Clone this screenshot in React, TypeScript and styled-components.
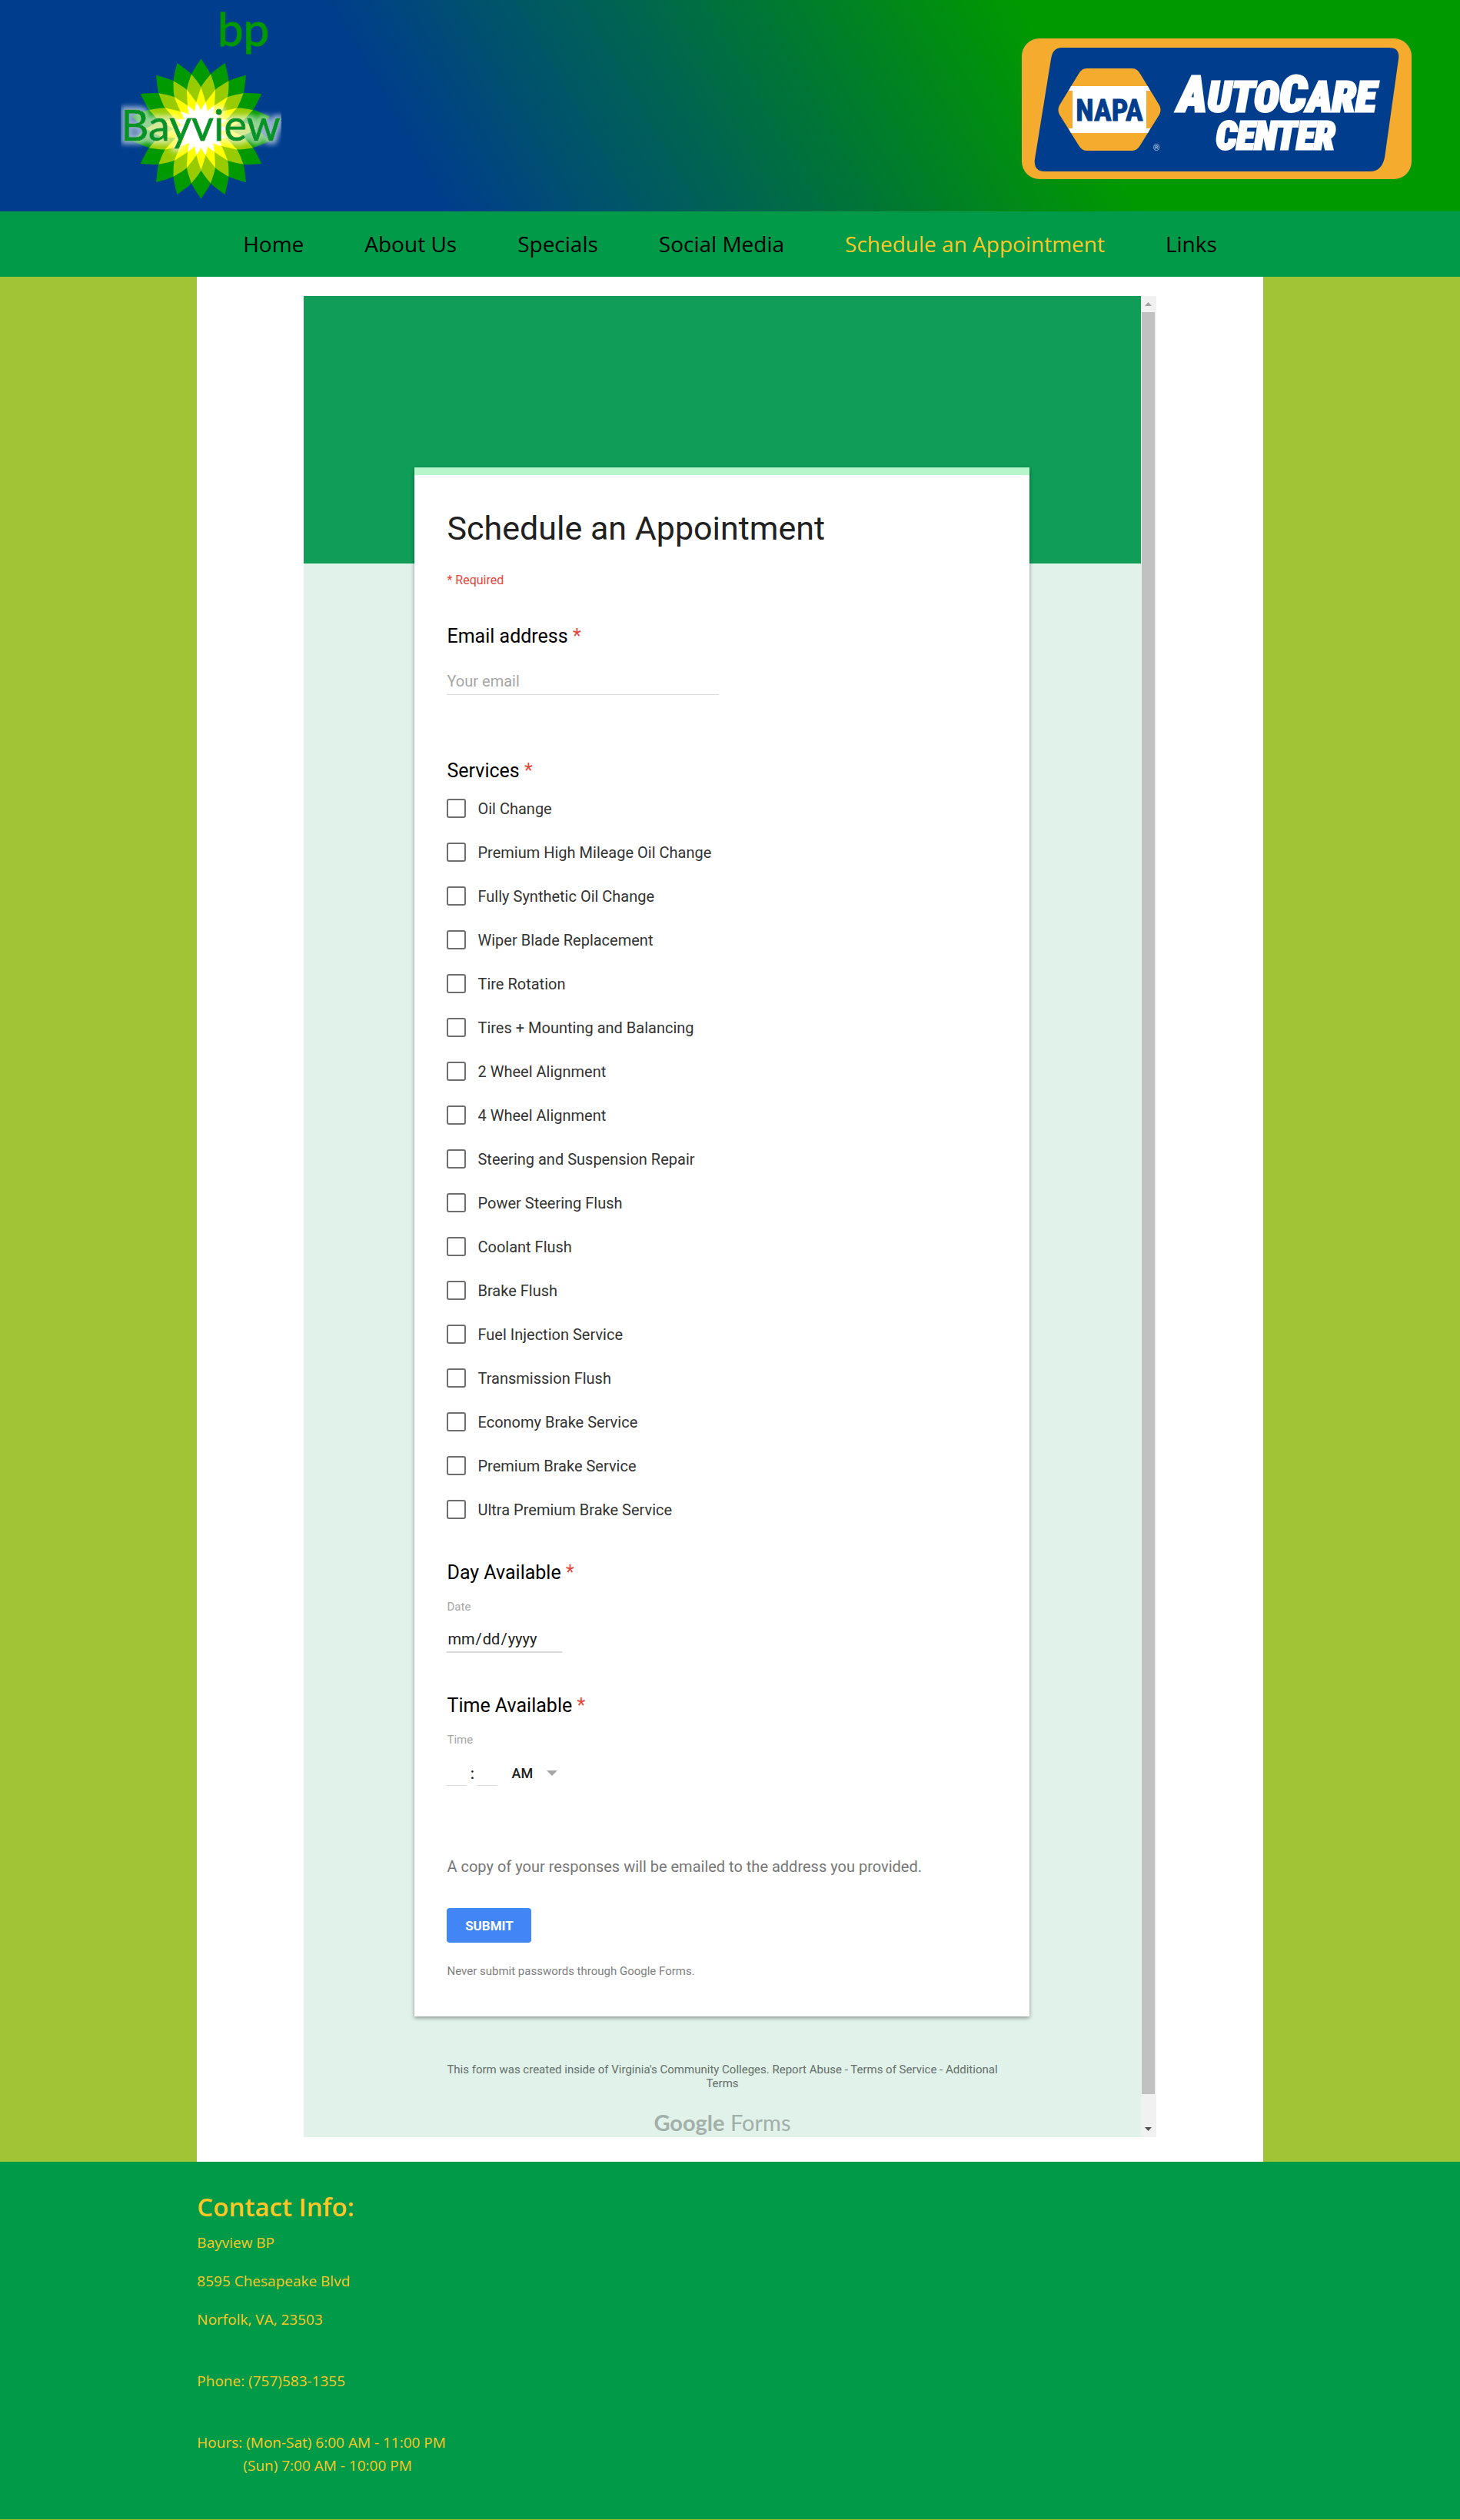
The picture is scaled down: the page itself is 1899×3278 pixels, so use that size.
import React from "react";
import styled, { createGlobalStyle } from "styled-components";

const SANS = `"Open Sans", "Noto Sans", sans-serif`;
const FORM = `Roboto, "Liberation Sans", sans-serif`;

const GlobalStyle = createGlobalStyle`
  *, *::before, *::after { box-sizing: border-box; }
  body { margin: 0; background: #a1c436; font-family: ${SANS}; }
  h1, h2, h3, p, ul, fieldset { margin: 0; padding: 0; border: 0; }
  ul { list-style: none; }
`;

/* ---------- site header ---------- */

const Header = styled.header`
  display: flex;
  justify-content: space-between;
  align-items: center;
  padding: 0 63px 0 157px;
  background: linear-gradient(60deg, #003d8d 28%, #009900 72%);
`;

const BpLogo = styled.svg`
  display: block;
  width: 209px;
  height: 275px;
`;

const NapaLogo = styled.svg`
  display: block;
  width: 507px;
  height: 183px;
  margin-top: 8px;
`;

const Nav = styled.nav`
  background: #009a49;
`;

const NavList = styled.ul`
  display: flex;
  justify-content: center;
  gap: 79px;
`;

const NavLink = styled.a<{ $active?: boolean }>`
  display: block;
  font-size: 28px;
  line-height: 85px;
  text-decoration: none;
  color: ${(p) => (p.$active ? "#ffc726" : "#000")};
`;

/* ---------- page body ---------- */

const Main = styled.main`
  width: 73%;
  margin: 0 auto;
  padding: 25px 0 32px;
  background: #fff;
`;

const Frame = styled.div`
  display: flex;
  width: 80%;
  margin: 0 auto;
`;

const FormPage = styled.div`
  flex: 1;
  display: flex;
  flex-direction: column;
  align-items: center;
  padding-top: 223px;
  font-family: ${FORM};
  background: linear-gradient(#0f9d58 348px, #e0f2e9 348px);
`;

const Card = styled.form`
  width: 100%;
  max-width: 800px;
  padding: 42px 42px 49px;
  border-top: 10px solid #b7f6cb;
  background: #fff;
  box-shadow: 0 2px 5px rgba(0, 0, 0, 0.4);
`;

const Title = styled.h1`
  font-size: 43px;
  font-weight: 400;
  line-height: 54px;
  color: #212121;
`;

const RequiredNote = styled.p`
  margin-top: 31px;
  font-size: 16px;
  line-height: 20px;
  color: #e5463a;
`;

const Question = styled.div<{ $gap: number }>`
  margin-top: ${(p) => p.$gap}px;
`;

const QuestionSet = styled.fieldset<{ $gap: number }>`
  min-width: 0;
  && { margin-top: ${(p) => p.$gap}px; }
`;

const QuestionTitle = styled.div`
  font-size: 25px;
  line-height: 32px;
  color: #000;
`;

const Legend = styled.legend`
  padding: 0;
`;

const Star = styled.span`
  color: #e5463a;
`;

const EmailInput = styled.input`
  display: block;
  width: 100%;
  max-width: 354px;
  height: 32px;
  margin-top: 28px;
  padding: 0 0 3px;
  border: 0;
  border-bottom: 1px solid #dadada;
  background: transparent;
  font: 20px ${FORM};
  color: #212121;
  &::placeholder { color: #a6a6a6; opacity: 1; }
`;

const Options = styled.ul`
  padding-top: 4px;
`;

const Option = styled.label`
  display: flex;
  align-items: center;
  gap: 15px;
  height: 57px;
  font-size: 20px;
  color: #333;
`;

const CheckBox = styled.input`
  appearance: none;
  width: 25px;
  height: 25px;
  margin: 0;
  border: 2px solid #6e6e6e;
  border-radius: 3px;
  background: #fff;
  &:checked { background: #0f9d58; }
`;

const FieldLabel = styled.label`
  display: block;
  margin-top: 18px;
  font-size: 15px;
  line-height: 20px;
  color: #a6a6a6;
`;

const DateInput = styled.input`
  display: block;
  width: 150px;
  height: 34px;
  margin-top: 16px;
  padding: 0;
  border: 0;
  border-bottom: 2px solid #dadada;
  background: transparent;
  font: 20px ${FORM};
  color: #212121;
  &::-webkit-calendar-picker-indicator { display: none; }
`;

const TimeRow = styled.div`
  display: flex;
  align-items: center;
  height: 33px;
  margin-top: 17px;
  font-size: 20px;
  font-weight: 500;
  color: #212121;
`;

const TimeInput = styled.input`
  width: 26px;
  height: 33px;
  padding: 0;
  border: 0;
  border-bottom: 1px solid #dadada;
  background: transparent;
  font: 20px ${FORM};
  text-align: center;
`;

const Colon = styled.span`
  width: 14px;
  text-align: center;
`;

const Meridiem = styled.div`
  display: flex;
  align-items: center;
  margin-left: 18px;
`;

const MeridiemSelect = styled.select`
  appearance: none;
  width: 46px;
  padding: 0;
  border: 0;
  background: transparent;
  font: 500 18px ${FORM};
  color: #212121;
`;

const CopyNote = styled.p`
  margin-top: 91px;
  font-size: 20px;
  line-height: 28px;
  color: #777;
`;

const Submit = styled.button`
  display: block;
  width: 110px;
  height: 45px;
  margin-top: 40px;
  padding: 0;
  border: 0;
  border-radius: 4px;
  background: #4285f4;
  font: 700 17px ${FORM};
  color: #fff;
`;

const SafetyNote = styled.p`
  margin-top: 27px;
  font-size: 15px;
  line-height: 20px;
  color: #808080;
`;

const Disclaimer = styled.p`
  width: 100%;
  max-width: 720px;
  margin-top: 60px;
  font-size: 15px;
  line-height: 18px;
  text-align: center;
  color: #666f6a;
`;

const PlainLink = styled.a`
  color: inherit;
  text-decoration: none;
`;

const FormsBrand = styled.a`
  display: block;
  margin: 24px 0 1px;
  font-family: Lato, sans-serif;
  font-size: 29px;
  line-height: 36px;
  text-decoration: none;
  color: #a3afa9;
`;

const BrandStrong = styled.span`
  font-weight: 700;
`;

/* ---------- scroll bar ---------- */

const ScrollBar = styled.div`
  display: flex;
  flex-direction: column;
  align-items: center;
  width: 20px;
  background: #f1f1f1;
`;

const ScrollButton = styled.button`
  display: flex;
  align-items: center;
  justify-content: center;
  width: 20px;
  height: 21px;
  padding: 0;
  border: 0;
  background: transparent;
`;

const ScrollTrack = styled.div`
  flex: 1;
  width: 17px;
`;

const ScrollThumb = styled.div`
  height: 98.5%;
  background: #c1c1c1;
`;

/* ---------- site footer ---------- */

const Footer = styled.footer`
  padding: 32px 13.5% 55px;
  background: #009a49;
  color: #ffc726;
`;

const FooterTitle = styled.h2`
  font-size: 33px;
  font-weight: 600;
  line-height: 54px;
`;

const FooterLine = styled.p<{ $before?: number }>`
  padding-top: ${(p) => p.$before ?? 0}px;
  font-size: 19px;
  line-height: 30px;
`;

const SundayHours = styled.span`
  display: block;
  padding-left: 60px;
`;

/* Right-hand edge of one petal in polar form: every 10 degrees it crosses the
   edge of a neighbour, which is where the next inner layer has its tip. */
const EDGE = [91, 72, 54, 35, 24, 13, 0];
const LAYERS = ["#009900", "#99cc00", "#ffff00", "#ffffff"];

function petal(layer: number) {
  const right = EDGE.slice(layer).map((r, i) => {
    const a = (i * Math.PI) / 18;
    return [r * Math.sin(a), -r * Math.cos(a)];
  });
  const curve = (pts: number[][]) => {
    let d = "";
    for (let i = 0; i < pts.length - 1; i++) {
      const p0 = pts[Math.max(i - 1, 0)];
      const p1 = pts[i];
      const p2 = pts[i + 1];
      const p3 = pts[Math.min(i + 2, pts.length - 1)];
      d += `C${p1[0] + (p2[0] - p0[0]) / 6} ${p1[1] + (p2[1] - p0[1]) / 6} ${
        p2[0] - (p3[0] - p1[0]) / 6
      } ${p2[1] - (p3[1] - p1[1]) / 6} ${p2[0]} ${p2[1]}`;
    }
    return d;
  };
  const left = right.map(([x, y]) => [-x, y]).reverse();
  return `M${right[0][0]} ${right[0][1]}${curve(right)}${curve(left)}Z`;
}

function Helios() {
  return (
    <g transform="translate(104.5 167.5)">
      {LAYERS.map((fill, layer) =>
        Array.from({ length: 18 }, (_, i) => (
          <path
            key={`${layer}-${i}`}
            d={petal(layer)}
            fill={fill}
            transform={`rotate(${i * 20 + (layer % 2) * 10})`}
          />
        ))
      )}
    </g>
  );
}

const NAV = ["Home", "About Us", "Specials", "Social Media", "Schedule an Appointment", "Links"];

const SERVICES = [
  "Oil Change",
  "Premium High Mileage Oil Change",
  "Fully Synthetic Oil Change",
  "Wiper Blade Replacement",
  "Tire Rotation",
  "Tires + Mounting and Balancing",
  "2 Wheel Alignment",
  "4 Wheel Alignment",
  "Steering and Suspension Repair",
  "Power Steering Flush",
  "Coolant Flush",
  "Brake Flush",
  "Fuel Injection Service",
  "Transmission Flush",
  "Economy Brake Service",
  "Premium Brake Service",
  "Ultra Premium Brake Service",
];

const BADGE = `"Liberation Sans Narrow", "Roboto Condensed", "Open Sans Condensed", Roboto, sans-serif`;

export default function App() {
  return (
    <>
      <GlobalStyle />
      <Header>
        <BpLogo viewBox="0 0 209 275" role="img" aria-label="Bayview bp">
          <defs>
            <filter id="glow" x="-20%" y="-40%" width="140%" height="180%">
              <feMorphology in="SourceAlpha" operator="dilate" radius="4" result="fat" />
              <feGaussianBlur in="fat" stdDeviation="3" result="soft" />
              <feFlood floodColor="#fff" floodOpacity="0.58" />
              <feComposite in2="soft" operator="in" result="halo" />
              <feMerge>
                <feMergeNode in="halo" />
                <feMergeNode in="SourceGraphic" />
              </feMerge>
            </filter>
          </defs>
          <text
            x="126"
            y="60"
            fontFamily="Lato, sans-serif"
            fontSize="60"
            fill="#009900"
            stroke="#009900"
            strokeWidth="1"
          >
            bp
          </text>
          <Helios />
          <text
            x="104"
            y="183"
            textAnchor="middle"
            fontFamily="Lato, sans-serif"
            fontSize="56"
            fill="#009428"
            stroke="#009428"
            strokeWidth="1"
            filter="url(#glow)"
          >
            Bayview
          </text>
        </BpLogo>
        <NapaLogo viewBox="0 0 507 183" role="img" aria-label="NAPA AutoCare Center">
          <rect width="507" height="183" rx="23" fill="#f5ab2d" />
          <path
            d="M52 12H478Q492 12 490 27L472 155Q468 173 453 173H30Q15 173 17 157L38 27Q40 12 52 12Z"
            fill="#003d8d"
          />
          <path
            d="M84 39H144Q150 39 154 46L179 87Q182 93 179 99L154 139Q150 146 144 146H84Q78 146 74 139L49 99Q46 93 49 87L74 46Q78 39 84 39Z"
            fill="#f5ab2d"
          />
          <path d="M64 62H164L167 68H61ZM61 117H167L164 123H64Z" fill="#fff" />
          <rect x="66" y="64" width="96" height="56" fill="#fff" />
          <text
            x="114"
            y="107"
            textAnchor="middle"
            fontFamily={BADGE}
            fontWeight="700"
            fontSize="38"
            fill="#003d8d"
            stroke="#003d8d"
            strokeWidth="1"
          >
            NAPA
          </text>
          <text x="175" y="146" textAnchor="middle" fontFamily="Roboto, sans-serif" fontSize="11" fill="#c8d4e6">
            ®
          </text>
          <g fontFamily={BADGE} fontWeight="900" fontStyle="italic" fill="#fff" stroke="#fff" strokeWidth="3">
            <text x="332" y="95" textAnchor="middle" fontSize="65">
              A<tspan fontSize="56">UTO</tspan>C<tspan fontSize="56">ARE</tspan>
            </text>
            <text x="330" y="144" textAnchor="middle" fontSize="49">
              CENTER
            </text>
          </g>
        </NapaLogo>
      </Header>

      <Nav>
        <NavList>
          {NAV.map((name) => (
            <li key={name}>
              <NavLink href="#" $active={name === "Schedule an Appointment"}>
                {name}
              </NavLink>
            </li>
          ))}
        </NavList>
      </Nav>

      <Main>
        <Frame>
          <FormPage>
            <Card onSubmit={(e) => e.preventDefault()}>
              <Title>Schedule an Appointment</Title>
              <RequiredNote>* Required</RequiredNote>

              <Question $gap={47}>
                <QuestionTitle as="label" htmlFor="email">
                  Email address <Star>*</Star>
                </QuestionTitle>
                <EmailInput id="email" type="email" placeholder="Your email" />
              </Question>

              <QuestionSet $gap={83}>
                <Legend>
                  <QuestionTitle>
                    Services <Star>*</Star>
                  </QuestionTitle>
                </Legend>
                <Options>
                  {SERVICES.map((name) => (
                    <li key={name}>
                      <Option>
                        <CheckBox type="checkbox" name="services" value={name} />
                        {name}
                      </Option>
                    </li>
                  ))}
                </Options>
              </QuestionSet>

              <Question $gap={38}>
                <QuestionTitle>
                  Day Available <Star>*</Star>
                </QuestionTitle>
                <FieldLabel htmlFor="date">Date</FieldLabel>
                <DateInput id="date" type="date" />
              </Question>

              <Question $gap={53}>
                <QuestionTitle>
                  Time Available <Star>*</Star>
                </QuestionTitle>
                <FieldLabel htmlFor="hour">Time</FieldLabel>
                <TimeRow>
                  <TimeInput id="hour" type="text" />
                  <Colon>:</Colon>
                  <TimeInput type="text" aria-label="Minute" />
                  <Meridiem>
                    <MeridiemSelect aria-label="AM or PM" defaultValue="AM">
                      <option>AM</option>
                      <option>PM</option>
                    </MeridiemSelect>
                    <svg width="14" height="7" viewBox="0 0 14 7" aria-hidden="true">
                      <path d="M0 0H14L7 7Z" fill="#a6a6a6" />
                    </svg>
                  </Meridiem>
                </TimeRow>
              </Question>

              <CopyNote>A copy of your responses will be emailed to the address you provided.</CopyNote>
              <Submit type="submit">SUBMIT</Submit>
              <SafetyNote>Never submit passwords through Google Forms.</SafetyNote>
            </Card>

            <Disclaimer>
              This form was created inside of Virginia's Community Colleges.{" "}
              <PlainLink href="#">Report Abuse</PlainLink> - <PlainLink href="#">Terms of Service</PlainLink> -{" "}
              <PlainLink href="#">Additional Terms</PlainLink>
            </Disclaimer>
            <FormsBrand href="#">
              <BrandStrong>Google</BrandStrong> Forms
            </FormsBrand>
          </FormPage>

          <ScrollBar>
            <ScrollButton type="button" aria-label="Scroll up">
              <svg width="9" height="5" viewBox="0 0 9 5" aria-hidden="true">
                <path d="M0 5H9L4.5 0Z" fill="#a3a3a3" />
              </svg>
            </ScrollButton>
            <ScrollTrack>
              <ScrollThumb />
            </ScrollTrack>
            <ScrollButton type="button" aria-label="Scroll down">
              <svg width="9" height="5" viewBox="0 0 9 5" aria-hidden="true">
                <path d="M0 0H9L4.5 5Z" fill="#505050" />
              </svg>
            </ScrollButton>
          </ScrollBar>
        </Frame>
      </Main>

      <Footer>
        <FooterTitle>Contact Info:</FooterTitle>
        <FooterLine $before={4}>Bayview BP</FooterLine>
        <FooterLine $before={20}>8595 Chesapeake Blvd</FooterLine>
        <FooterLine $before={20}>Norfolk, VA, 23503</FooterLine>
        <FooterLine $before={50}>Phone: (757)583-1355</FooterLine>
        <FooterLine $before={50}>
          Hours: (Mon-Sat) 6:00 AM - 11:00 PM
          <SundayHours>(Sun) 7:00 AM - 10:00 PM</SundayHours>
        </FooterLine>
      </Footer>
    </>
  );
}
